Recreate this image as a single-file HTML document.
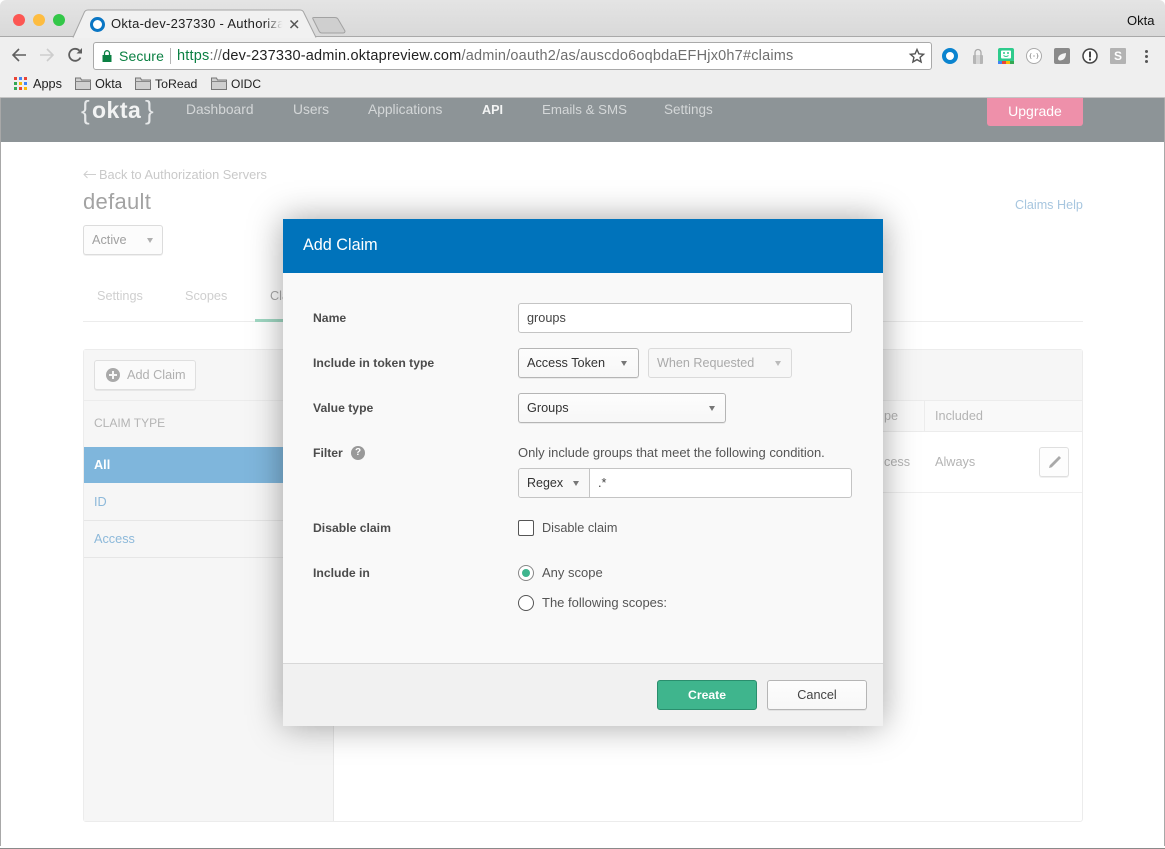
<!DOCTYPE html>
<html><head><meta charset="utf-8"><style>
html,body{margin:0;padding:0;width:1165px;height:849px;overflow:hidden;background:#fff;font-family:"Liberation Sans",sans-serif;}
.a{position:absolute;}
.t{position:absolute;white-space:nowrap;font-size:12.7px;line-height:16px;color:#5e5e5e;}
.b{position:absolute;box-sizing:border-box;border:1px solid #b5b5b5;border-radius:3px;background:linear-gradient(#fdfdfd,#f7f7f7);box-shadow:0 1px 0 rgba(0,0,0,.06);}
.arr{position:absolute;width:0;height:0;border-left:3.500px solid transparent;border-right:3.500px solid transparent;border-top:5px solid #777;}
.lab{font-weight:bold;color:#4c4c4c;font-size:12.200px !important;}
svg{position:absolute;overflow:visible;}
</style></head><body>

<!-- chrome top -->
<div class="a" style="left:0;top:0;width:1165px;height:37px;background:linear-gradient(#e4e4e4,#d9d9d9);border-bottom:1px solid #a9a9a9;box-sizing:border-box;border-radius:6px 6px 0 0;"></div>
<div class="a" style="left:0;top:37px;width:1165px;height:61px;background:#efefef;border-bottom:1px solid #c4c4c4;box-sizing:border-box;"></div>
<div class="a" style="left:13px;top:14px;width:12px;height:12px;border-radius:50%;background:#fc5753;"></div>
<div class="a" style="left:33px;top:14px;width:12px;height:12px;border-radius:50%;background:#fdbc40;"></div>
<div class="a" style="left:53px;top:14px;width:12px;height:12px;border-radius:50%;background:#33c748;"></div>
<svg style="left:0;top:0" width="400" height="40"><path d="M73 38 L84 13 Q85 10 88 10 L300 10 Q303 10 304 13 L316 38Z" fill="#f1f1f1"/><path d="M73 37.500 L84 13 Q85 10 88 10 L300 10 Q303 10 304 13 L316 37.500" fill="none" stroke="#a5a5a5"/><path d="M314 17.500 L335 17.500 Q337 17.500 338 19 L345 31 Q345 33 343 33 L322 33 Q320 33 319 31 L313 19 Q312 17.500 314 17.500Z" fill="#cfcfcf" stroke="#a2a2a2"/></svg>
<div class="a" style="left:90px;top:17px;width:15px;height:15px;box-sizing:border-box;border:3.500px solid #0a76c4;border-radius:50%;background:#fff;"></div>
<div class="t" style="left:111px;top:16px;color:#222;font-size:13px;letter-spacing:.28px;width:174px;overflow:hidden;">Okta-dev-237330 - Authorizat</div>
<div class="a" style="left:265px;top:12px;width:22px;height:24px;background:linear-gradient(90deg,rgba(241,241,241,0),#f1f1f1 80%);"></div>
<svg style="left:290px;top:20px" width="9" height="9"><path d="M.5.5L8 8M8 .5L.5 8" stroke="#555" stroke-width="1.500"/></svg>
<div class="t" style="left:1127px;top:13px;color:#111;font-size:13px;">Okta</div>

<!-- nav icons -->
<svg style="left:11px;top:47px" width="16" height="16"><path d="M15 8H2M8 2L2 8l6 6" fill="none" stroke="#5f5f5f" stroke-width="1.600"/></svg>
<svg style="left:39px;top:47px" width="16" height="16"><path d="M1 8h13M8 2l6 6-6 6" fill="none" stroke="#cdcdcd" stroke-width="1.600"/></svg>
<svg style="left:67px;top:47px" width="16" height="16"><path d="M13.500 10.500A6 6 0 1 1 12.400 3.600" fill="none" stroke="#5f5f5f" stroke-width="1.800"/><path d="M9.500 6.500H15V1Z" fill="#5f5f5f"/></svg>

<!-- omnibox -->
<div class="a" style="left:93px;top:42px;width:839px;height:28px;box-sizing:border-box;background:#fff;border:1px solid #a9a9a9;border-radius:3px;"></div>
<svg style="left:102px;top:50px" width="10" height="12"><path d="M2.500 5V3.200a2.500 2.500 0 0 1 5 0V5" fill="none" stroke="#0b8043" stroke-width="1.300"/><rect x="0.500" y="5" width="9" height="7" fill="#0b8043"/></svg>
<div class="t" style="left:119px;top:48px;font-size:14px;color:#0b8043;letter-spacing:.1px;">Secure</div>
<div class="a" style="left:170px;top:48px;width:1px;height:16px;background:#b5b5b5;"></div>
<div class="t" style="left:177px;top:48px;font-size:14.500px;color:#6f6f6f;letter-spacing:.2px;"><span style="color:#0b8043">https</span>://<span style="color:#222">dev-237330-admin.oktapreview.com</span>/admin/oauth2/as/auscdo6oqbdaEFHjx0h7#claims</div>
<svg style="left:909px;top:48px" width="16" height="16"><path d="M8 1.500l1.900 4.300 4.700.5-3.500 3.100 1 4.600L8 11.600l-4.100 2.400 1-4.600L1.400 6.300l4.700-.5Z" fill="none" stroke="#555" stroke-width="1.400"/></svg>

<!-- extensions -->
<div class="a" style="left:942px;top:48px;width:16px;height:16px;box-sizing:border-box;border:4.500px solid #0b84cf;border-radius:50%;background:#fff;"></div>
<svg style="left:972px;top:48px" width="12" height="16"><path d="M3 7V4.500a3 3 0 0 1 6 0V7" fill="none" stroke="#aaa" stroke-width="1.300"/><rect x="1" y="7" width="10" height="9" rx="1" fill="#b5b5b5"/><rect x="4" y="7" width="4" height="9" fill="#d5d5d5"/></svg>
<svg style="left:998px;top:48px" width="16" height="16"><rect width="16" height="14" rx="2" fill="#2ecb8c"/><rect y="13" width="4" height="3" fill="#4285f4"/><rect x="4" y="13" width="4" height="3" fill="#ea4335"/><rect x="8" y="13" width="4" height="3" fill="#fbbc05"/><rect x="12" y="13" width="4" height="3" fill="#34a853"/><rect x="3" y="2.500" width="10" height="8" rx="1" fill="#fff"/><circle cx="6" cy="5" r="1" fill="#2ecb8c"/><circle cx="10" cy="5" r="1" fill="#2ecb8c"/><path d="M5.500 7.500q2.500 2 5 0" fill="none" stroke="#2ecb8c"/></svg>
<svg style="left:1026px;top:48px" width="16" height="16"><circle cx="8" cy="8" r="7.500" fill="#fff" stroke="#aaa"/><path d="M5.500 5.500q-1 0-1 1v1l-.7.500.7.500v1q0 1 1 1M10.500 5.500q1 0 1 1v1l.7.500-.7.500v1q0 1-1 1M7 8h2" fill="none" stroke="#999" stroke-width=".8"/></svg>
<svg style="left:1054px;top:48px" width="16" height="16"><rect width="16" height="16" rx="2" fill="#8a8a8a"/><path d="M4 11q0-5 8-6 0 7-6 7.500Q4.500 12.500 4 11Z" fill="#f4f4f4"/></svg>
<svg style="left:1082px;top:48px" width="16" height="16"><circle cx="8" cy="8" r="7" fill="#fff" stroke="#444" stroke-width="1.500"/><rect x="7" y="3.500" width="2" height="6" fill="#444"/><rect x="7" y="10.500" width="2" height="2" fill="#444"/></svg>
<div class="a" style="left:1110px;top:48px;width:16px;height:16px;background:#b3b3b3;border-radius:1px;color:#fff;font-weight:bold;font-size:12px;line-height:16px;text-align:center;">S</div>
<div class="a" style="left:1145px;top:50px;width:3px;height:3px;border-radius:50%;background:#555;"></div>
<div class="a" style="left:1145px;top:55px;width:3px;height:3px;border-radius:50%;background:#555;"></div>
<div class="a" style="left:1145px;top:60px;width:3px;height:3px;border-radius:50%;background:#555;"></div>

<!-- bookmarks -->
<svg style="left:14px;top:77px" width="13" height="13"><g><rect width="3" height="3" fill="#ea4335"/><rect x="5" width="3" height="3" fill="#4285f4"/><rect x="10" width="3" height="3" fill="#ea4335"/><rect y="5" width="3" height="3" fill="#34a853"/><rect x="5" y="5" width="3" height="3" fill="#fbbc05"/><rect x="10" y="5" width="3" height="3" fill="#4285f4"/><rect y="10" width="3" height="3" fill="#34a853"/><rect x="5" y="10" width="3" height="3" fill="#ea4335"/><rect x="10" y="10" width="3" height="3" fill="#fbbc05"/></g></svg>
<div class="t" style="left:33px;top:76px;font-size:12.700px;color:#222;">Apps</div>
<svg style="left:75px;top:77px" width="16" height="13"><path d="M.5 12.500V1h5l1 2h9v9.500Z" fill="#cfcfcf" stroke="#777"/><path d="M.5 4.500h15" stroke="#888"/></svg>
<div class="t" style="left:95px;top:76px;font-size:12.700px;color:#222;">Okta</div>
<svg style="left:135px;top:77px" width="16" height="13"><path d="M.5 12.500V1h5l1 2h9v9.500Z" fill="#cfcfcf" stroke="#777"/><path d="M.5 4.500h15" stroke="#888"/></svg>
<div class="t" style="left:155px;top:76px;font-size:12.300px;color:#222;">ToRead</div>
<svg style="left:211px;top:77px" width="16" height="13"><path d="M.5 12.500V1h5l1 2h9v9.500Z" fill="#cfcfcf" stroke="#777"/><path d="M.5 4.500h15" stroke="#888"/></svg>
<div class="t" style="left:231px;top:76px;font-size:12px;color:#222;">OIDC</div>

<!-- okta nav -->
<div class="a" style="left:0;top:98px;width:1165px;height:44px;background:#8d9497;"></div>
<div class="t" style="left:81px;top:94px;font-size:26px;line-height:32px;color:#e6e8e9;">{</div>
<div class="t" style="left:92px;top:97px;font-size:23px;line-height:26px;color:#f2f3f3;font-weight:bold;letter-spacing:.5px;">okta</div>
<div class="t" style="left:145px;top:94px;font-size:26px;line-height:32px;color:#e6e8e9;">}</div>
<div class="t" style="left:186px;top:102px;font-size:13.800px;color:#d4d7d8;">Dashboard</div>
<div class="t" style="left:293px;top:102px;font-size:13.800px;color:#d4d7d8;">Users</div>
<div class="t" style="left:368px;top:102px;font-size:13.800px;color:#d4d7d8;">Applications</div>
<div class="t" style="left:482px;top:102px;font-size:12.600px;font-weight:bold;color:#f3f4f4;">API</div>
<div class="t" style="left:542px;top:102px;font-size:13.300px;color:#d4d7d8;">Emails &amp; SMS</div>
<div class="t" style="left:664px;top:102px;font-size:13.500px;color:#d4d7d8;">Settings</div>
<div class="a" style="left:987px;top:98px;width:96px;height:28px;background:#ee90aa;border-radius:0 0 3px 3px;color:#fff;font-size:14px;line-height:27px;text-align:center;">Upgrade</div>

<!-- page -->
<svg style="left:83px;top:170px" width="14" height="9"><path d="M13 4.500H1M4.500 1L1 4.500 4.500 8" fill="none" stroke="#cfcfcf"/></svg>
<div class="t" style="left:99px;top:167px;color:#c9c9c9;font-size:12.800px;">Back to Authorization Servers</div>
<div class="t" style="left:83px;top:189px;font-size:22px;line-height:26px;color:#a3a3a3;letter-spacing:.3px;">default</div>
<div class="b" style="left:83px;top:225px;width:80px;height:30px;border-color:#dcdcdc;background:#fcfcfc;"></div>
<div class="t" style="left:92px;top:232px;color:#a0a0a0;">Active</div>
<div class="arr" style="left:147px;top:238px;border-top-color:#b0b0b0;"></div>
<div class="t" style="left:1015px;top:197px;color:#a7c6df;font-size:12.600px;">Claims Help</div>
<div class="t" style="left:97px;top:288px;color:#cfcfcf;">Settings</div>
<div class="t" style="left:185px;top:288px;color:#cfcfcf;">Scopes</div>
<div class="t" style="left:270px;top:288px;color:#a9a9a9;">Cla</div>
<div class="a" style="left:83px;top:321px;width:1000px;height:1px;background:#ececec;"></div>
<div class="a" style="left:255px;top:319px;width:40px;height:3px;background:#a0d8c3;"></div>

<!-- panel -->
<div class="a" style="left:83px;top:349px;width:1000px;height:473px;box-sizing:border-box;border:1px solid #ececec;border-radius:3px;background:#fff;"></div>
<div class="a" style="left:84px;top:350px;width:998px;height:50px;background:#f6f6f6;border-bottom:1px solid #ececec;"></div>
<div class="a" style="left:84px;top:401px;width:249px;height:420px;background:#f6f6f6;border-right:1px solid #e8e8e8;"></div>
<div class="a" style="left:334px;top:401px;width:748px;height:30px;background:#f9f9f9;border-bottom:1px solid #ececec;"></div>
<div class="a" style="left:924px;top:401px;width:1px;height:30px;background:#ececec;"></div>
<div class="b" style="left:94px;top:360px;width:102px;height:30px;border-color:#dfdfdf;background:#fafafa;"></div>
<div class="a" style="left:106px;top:368px;width:14px;height:14px;border-radius:50%;background:#a9a9a9;"></div>
<div class="a" style="left:109px;top:374px;width:8px;height:2px;background:#f6f6f6;"></div>
<div class="a" style="left:112px;top:371px;width:2px;height:8px;background:#f6f6f6;"></div>
<div class="t" style="left:127px;top:367px;color:#b0b0b0;">Add Claim</div>
<div class="t" style="left:94px;top:415px;color:#b4b4b4;font-size:12px;">CLAIM TYPE</div>
<div class="a" style="left:84px;top:447px;width:249px;height:36px;background:#7fb6dc;"></div>
<div class="t" style="left:94px;top:457px;color:#fff;font-weight:bold;">All</div>
<div class="a" style="left:84px;top:520px;width:249px;height:1px;background:#e6e6e6;"></div>
<div class="a" style="left:84px;top:557px;width:249px;height:1px;background:#e6e6e6;"></div>
<div class="t" style="left:94px;top:494px;color:#8db9da;">ID</div>
<div class="t" style="left:94px;top:531px;color:#8db9da;">Access</div>
<div class="t" style="left:884px;top:408px;color:#b4b4b4;">pe</div>
<div class="t" style="left:935px;top:408px;color:#b4b4b4;">Included</div>
<div class="t" style="left:884px;top:454px;color:#b4b4b4;">cess</div>
<div class="t" style="left:935px;top:454px;color:#b4b4b4;">Always</div>
<div class="a" style="left:334px;top:492px;width:748px;height:1px;background:#efefef;"></div>
<div class="b" style="left:1039px;top:447px;width:30px;height:30px;border-color:#dfdfdf;background:#fdfdfd;"></div>
<svg style="left:1048px;top:455px" width="14" height="14"><path d="M1 13l.8-2.800L11 1l2 2-9.200 9.200Z" fill="#a9a9a9"/></svg>

<!-- modal -->
<div class="a" style="left:283px;top:219px;width:600px;height:507px;background:#f9f9f9;box-shadow:0 0 32px rgba(0,0,0,.36);"></div>
<div class="a" style="left:283px;top:219px;width:600px;height:54px;background:#0073bb;"></div>
<div class="t" style="left:303px;top:235px;color:#fff;font-size:16.200px;line-height:20px;">Add Claim</div>

<div class="t lab" style="left:313px;top:310px;">Name</div>
<div class="t lab" style="left:313px;top:355px;">Include in token type</div>
<div class="t lab" style="left:313px;top:400px;">Value type</div>
<div class="t lab" style="left:313px;top:445px;">Filter</div>
<div class="a" style="left:351px;top:446px;width:14px;height:14px;border-radius:50%;background:#999;color:#fff;font-size:10px;font-weight:bold;line-height:14px;text-align:center;">?</div>
<div class="t lab" style="left:313px;top:520px;">Disable claim</div>
<div class="t lab" style="left:313px;top:565px;">Include in</div>

<div class="a" style="left:518px;top:303px;width:334px;height:30px;box-sizing:border-box;background:#fff;border:1px solid #c4c4c4;border-radius:3px;"></div>
<div class="t" style="left:527px;top:310px;color:#444;">groups</div>

<div class="b" style="left:518px;top:348px;width:121px;height:30px;"></div>
<div class="t" style="left:527px;top:355px;color:#333;">Access Token</div>
<div class="arr" style="left:621px;top:361px;"></div>
<div class="b" style="left:648px;top:348px;width:144px;height:30px;border-color:#dadada;background:#f7f7f7;box-shadow:none;"></div>
<div class="t" style="left:657px;top:355px;color:#aaa;font-size:12.600px;">When Requested</div>
<div class="arr" style="left:775px;top:361px;border-top-color:#bbb;"></div>

<div class="b" style="left:518px;top:393px;width:208px;height:30px;"></div>
<div class="t" style="left:527px;top:400px;color:#333;">Groups</div>
<div class="arr" style="left:709px;top:406px;"></div>

<div class="t" style="left:518px;top:445px;color:#555;font-size:13px;letter-spacing:-.02px;">Only include groups that meet the following condition.</div>

<div class="a" style="left:518px;top:468px;width:334px;height:30px;box-sizing:border-box;background:#fff;border:1px solid #c4c4c4;border-radius:3px;"></div>
<div class="a" style="left:519px;top:469px;width:70px;height:28px;background:#f8f8f8;border-right:1px solid #c4c4c4;border-radius:3px 0 0 3px;"></div>
<div class="t" style="left:527px;top:475px;color:#333;font-size:12.500px;">Regex</div>
<div class="arr" style="left:573px;top:481px;"></div>
<div class="t" style="left:598px;top:475px;color:#444;">.*</div>

<div class="a" style="left:518px;top:520px;width:16px;height:16px;box-sizing:border-box;background:#fff;border:1px solid #555;border-radius:2px;"></div>
<div class="t" style="left:542px;top:520px;color:#555;">Disable claim</div>

<div class="a" style="left:518px;top:565px;width:16px;height:16px;box-sizing:border-box;background:#fff;border:1px solid #888;border-radius:50%;"></div>
<div class="a" style="left:522px;top:569px;width:8px;height:8px;background:#3eb58e;border-radius:50%;"></div>
<div class="t" style="left:542px;top:565px;color:#555;font-size:13px;">Any scope</div>
<div class="a" style="left:518px;top:595px;width:16px;height:16px;box-sizing:border-box;background:#fff;border:1px solid #555;border-radius:50%;"></div>
<div class="t" style="left:542px;top:595px;color:#555;font-size:13px;">The following scopes:</div>

<div class="a" style="left:283px;top:663px;width:600px;height:63px;box-sizing:border-box;background:#f1f1f1;border-top:1px solid #d8d8d8;"></div>
<div class="a" style="left:657px;top:680px;width:100px;height:30px;box-sizing:border-box;background:#3fb58d;border:1px solid #2a8e6d;border-radius:3px;color:#fff;font-size:12.200px;font-weight:bold;line-height:29px;text-align:center;">Create</div>
<div class="b" style="left:767px;top:680px;width:100px;height:30px;color:#444;font-size:12.700px;line-height:29px;text-align:center;">Cancel</div>

<!-- window edge -->
<div class="a" style="left:0;top:98px;width:1px;height:748px;background:#a8a8a8;"></div>
<div class="a" style="left:1164px;top:98px;width:1px;height:748px;background:#a8a8a8;"></div>
<div class="a" style="left:0;top:848px;width:1165px;height:1px;background:#8a8a8a;"></div>
</body></html>
